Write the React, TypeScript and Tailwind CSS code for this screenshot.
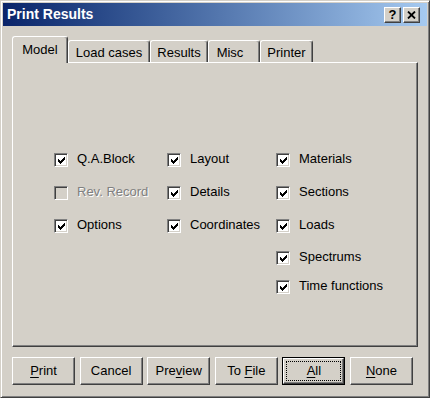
import React from "react";

const FONT = "font-['Liberation_Sans',Arial,sans-serif]";

function CheckMark() {
  const cols = [2, 3, 4, 3, 2, 1, 0];
  return (
    <svg width="7" height="7" viewBox="0 0 7 7" shapeRendering="crispEdges">
      {cols.map((y, x) => (
        <rect key={x} x={x} y={y} width={1} height={3} fill="#000" />
      ))}
    </svg>
  );
}

function Box({ checked, disabled }: { checked: boolean; disabled?: boolean }) {
  return (
    <div
      className={`mt-[2px] w-[14px] h-[14px] shrink-0 border border-t-[#808080] border-l-[#808080] border-b-white border-r-white shadow-[inset_1px_1px_0_#404040,inset_-1px_-1px_0_#d4d0c8] flex items-center justify-center ${
        disabled ? "bg-[#d4d0c8]" : "bg-white"
      }`}
    >
      {checked && <CheckMark />}
    </div>
  );
}

type Item = { label: string; checked: boolean; disabled?: boolean };

const rowHeights = ["h-[33px]", "h-[33px]", "h-[32px]", "h-[29px]", "h-[16px]"];

function Column({ items, width }: { items: Item[]; width: string }) {
  return (
    <div className={`flex flex-col ${width}`}>
      {items.map((it, i) => (
        <div key={it.label} className={`flex items-start gap-[9px] ${rowHeights[i]}`}>
          <Box checked={it.checked} disabled={it.disabled} />
          <span
            className={`text-[13px] leading-[16px] whitespace-nowrap ${
              it.disabled ? "text-[#808080] [text-shadow:1px_1px_0_#ffffff]" : "text-black"
            }`}
          >
            {it.label}
          </span>
        </div>
      ))}
    </div>
  );
}

function Tab({
  label,
  width,
  selected,
  extra,
}: {
  label: string;
  width: string;
  selected?: boolean;
  extra?: string;
}) {
  if (selected) {
    return (
      <div
        className={`${width} h-[27px] -mb-px relative z-10 bg-[#d4d0c8] border-t border-l border-r border-t-white border-l-white border-r-[#404040] rounded-t-[3px] shadow-[inset_-1px_0_0_#808080] flex justify-center pt-[5px] text-[13px] leading-[16px] text-black`}
      >
        {label}
      </div>
    );
  }
  return (
    <div
      className={`${width} h-[22px] bg-[#d4d0c8] border-t border-l border-r border-t-white border-l-white border-r-[#404040] rounded-t-[3px] shadow-[inset_-1px_0_0_#808080] flex justify-center pt-[4px] text-[13px] leading-[16px] text-black ${extra ?? ""}`}
    >
      {label}
    </div>
  );
}

function Button({ children, isDefault }: { children: React.ReactNode; isDefault?: boolean }) {
  if (isDefault) {
    return (
      <div className="w-[63px] h-[28px] border border-black">
        <div className="w-full h-full border border-t-white border-l-white border-r-[#404040] border-b-[#404040] shadow-[inset_-1px_-1px_0_#808080] p-[2px]">
          <div className="w-full h-full border border-dotted border-black flex items-center justify-center text-[13px] leading-[16px] text-black">
            <span>{children}</span>
          </div>
        </div>
      </div>
    );
  }
  return (
    <div className="w-[63px] h-[28px] border border-t-white border-l-white border-r-[#404040] border-b-[#404040] shadow-[inset_-1px_-1px_0_#808080] flex items-center justify-center text-[13px] leading-[16px] text-black">
      <span className="whitespace-pre">{children}</span>
    </div>
  );
}

function U({ children }: { children: React.ReactNode }) {
  return <span className="underline underline-offset-[2px] decoration-1">{children}</span>;
}

function TitleBtn({ children }: { children: React.ReactNode }) {
  return (
    <div className="w-[17px] h-[16px] bg-[#d4d0c8] border border-t-white border-l-white border-r-[#404040] border-b-[#404040] shadow-[inset_-1px_-1px_0_#808080] flex items-center justify-center">
      {children}
    </div>
  );
}

export default function App() {
  const col1: Item[] = [
    { label: "Q.A.Block", checked: true },
    { label: "Rev. Record", checked: false, disabled: true },
    { label: "Options", checked: true },
  ];
  const col2: Item[] = [
    { label: "Layout", checked: true },
    { label: "Details", checked: true },
    { label: "Coordinates", checked: true },
  ];
  const col3: Item[] = [
    { label: "Materials", checked: true },
    { label: "Sections", checked: true },
    { label: "Loads", checked: true },
    { label: "Spectrums", checked: true },
    { label: "Time functions", checked: true },
  ];

  return (
    <div className={`${FONT} w-[430px] h-[398px] bg-[#d4d0c8] border border-t-[#d4d0c8] border-l-[#d4d0c8] border-r-[#404040] border-b-[#404040] shadow-[inset_1px_1px_0_#ffffff,inset_-1px_-1px_0_#808080] p-[2px] flex flex-col`}>
      {/* Title bar */}
      <div className="h-[23px] bg-gradient-to-r from-[#0a246a] to-[#a6caf0] flex items-center pl-[4px] pr-[7px]">
        <span className="text-white font-bold text-[14px] leading-[23px] flex-1">Print Results</span>
        <div className="flex gap-[2px]">
          <TitleBtn>
            <span className="text-black font-bold text-[13px] leading-[13px]">?</span>
          </TitleBtn>
          <TitleBtn>
            <svg width="9" height="8" viewBox="0 0 9 8">
              <path d="M1 0.5 L8 7.5 M8 0.5 L1 7.5" stroke="#000" strokeWidth="1.8" />
            </svg>
          </TitleBtn>
        </div>
      </div>

      {/* Tabs */}
      <div className="ml-[9px] mt-[10px] flex items-end h-[26px]">
        <Tab label="Model" width="w-[56px]" selected />
        <Tab label="Load cases" width="w-[82px]" />
        <Tab label="Results" width="w-[58px]" />
        <Tab label="Misc" width="w-[52px]" extra="pr-[8px]" />
        <Tab label="Printer" width="w-[53px]" />
      </div>

      {/* Panel */}
      <div className="ml-[9px] w-[406px] h-[285px] border border-t-white border-l-white border-r-[#404040] border-b-[#404040] shadow-[inset_-1px_-1px_0_#808080] pt-[88px] pl-[41px] flex">
        <Column items={col1} width="w-[113px]" />
        <Column items={col2} width="w-[109px]" />
        <Column items={col3} width="w-[120px]" />
      </div>

      {/* Buttons */}
      <div className="ml-[9px] mt-[10px] w-[401px] flex justify-between">
        <Button>
          <U>P</U>rint
        </Button>
        <Button>Cancel</Button>
        <Button>
          Pre<U>v</U>iew
        </Button>
        <Button>
          To <U>F</U>ile
        </Button>
        <Button isDefault>
          <U>A</U>ll
        </Button>
        <Button>
          <U>N</U>one
        </Button>
      </div>
    </div>
  );
}
